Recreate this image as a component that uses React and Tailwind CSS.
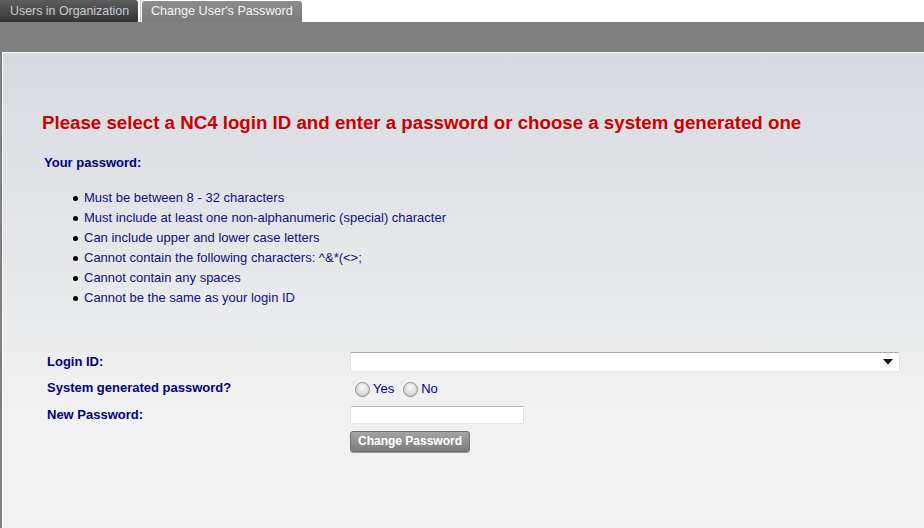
import React from 'react';

const rules = [
  "Must be between 8 - 32 characters",
  "Must include at least one non-alphanumeric (special) character",
  "Can include upper and lower case letters",
  "Cannot contain the following characters: ^&*(<>;",
  "Cannot contain any spaces",
  "Cannot be the same as your login ID",
];

function Radio({ label }) {
  return (
    <label className="flex items-center">
      <span className="w-[15px] h-[15px] rounded-full border border-[#8e8f8f] bg-[radial-gradient(circle_at_50%_35%,#fafafa_0%,#e2e2e2_45%,#bdbdbd_100%)]" />
      <span className="ml-[3px] text-[13px] text-[#00008b]">{label}</span>
    </label>
  );
}

export default function App() {
  return (
    <div className="w-[924px] h-[528px] bg-white overflow-hidden font-['Liberation_Sans',Arial,sans-serif] flex flex-col">
      {/* tabs */}
      <div className="flex items-end h-[22px]">
        <div className="w-[138px] h-[22px] rounded-tr-[3px] bg-gradient-to-b from-[#5e5e5e] to-[#353535] text-[#c6cdd4] text-[12.4px] leading-[22px] pl-[10px]">
          Users in Organization
        </div>
        <div className="w-[4px] h-[22px] flex justify-center">
          <div className="w-px h-full bg-[#c8c8c8]" />
        </div>
        <div className="w-[160px] h-[21px] rounded-t-[3px] bg-gradient-to-b from-[#8c8c8c] to-[#7a7a7a] text-[#f4f4f4] text-[12.6px] leading-[21px] pl-[9px]">
          Change User's Password
        </div>
      </div>
      <div className="h-[30px] bg-[#808080]" />

      {/* panel */}
      <div className="flex-1 border-l-2 border-[#808080]">
        <div className="h-full border-l border-t border-white bg-gradient-to-b from-[#d7dbe0] from-[2%] to-[#f1f1f1] to-[75%] pl-[39px]">
          <h1 className="mt-[59px] text-[#cc0000] font-bold text-[18.7px] leading-[21px]">
            Please select a NC4 login ID and enter a password or choose a system generated one
          </h1>
          <div className="mt-[22px] ml-[2px] text-[#000080] font-bold text-[13px] leading-[16px]">
            Your password:
          </div>
          <ul className="mt-[17px] ml-[31px] text-[13px] leading-[20px] text-[#101080]">
            {rules.map((r) => (
              <li key={r} className="flex items-center">
                <span className="w-[5px] h-[5px] rounded-full bg-black mr-[6px]" />
                {r}
              </li>
            ))}
          </ul>

          {/* form */}
          <div className="mt-[44px] ml-[5px] grid grid-cols-[303px_550px] text-[13px] text-[#000080] font-bold">
            <div className="h-[20px] flex items-center">Login ID:</div>
            <div className="h-[20px] bg-white border border-[#e2e2e2] border-t-[#a9a9a9] rounded-[2px] flex items-center justify-end pr-[6px]">
              <svg width="10" height="6" viewBox="0 0 10 6">
                <path d="M0 0h10L5 5.5z" fill="#111" />
              </svg>
            </div>

            <div className="h-[20px] mt-[6px] flex items-center">System generated password?</div>
            <div className="h-[20px] mt-[6px] flex items-center gap-[9px] pl-[5px] pt-[2px] font-normal">
              <Radio label="Yes" />
              <Radio label="No" />
            </div>

            <div className="h-[18px] mt-[8px] flex items-center">New Password:</div>
            <div className="h-[18px] mt-[8px]">
              <div className="w-[174px] h-[18px] bg-white border border-[#e2e2e2] border-t-[#b5b5b5] rounded-[2px]" />
            </div>

            <div />
            <div className="mt-[7px]">
              <button className="w-[120px] h-[21px] rounded-[3px] border border-[#6e6e6e] bg-gradient-to-b from-[#a4a4a4] to-[#7c7c7c] text-white font-bold text-[12px] leading-[19px] shadow-[0_1px_0_#9a9a9a]">
                Change Password
              </button>
            </div>
          </div>
        </div>
      </div>
    </div>
  );
}
